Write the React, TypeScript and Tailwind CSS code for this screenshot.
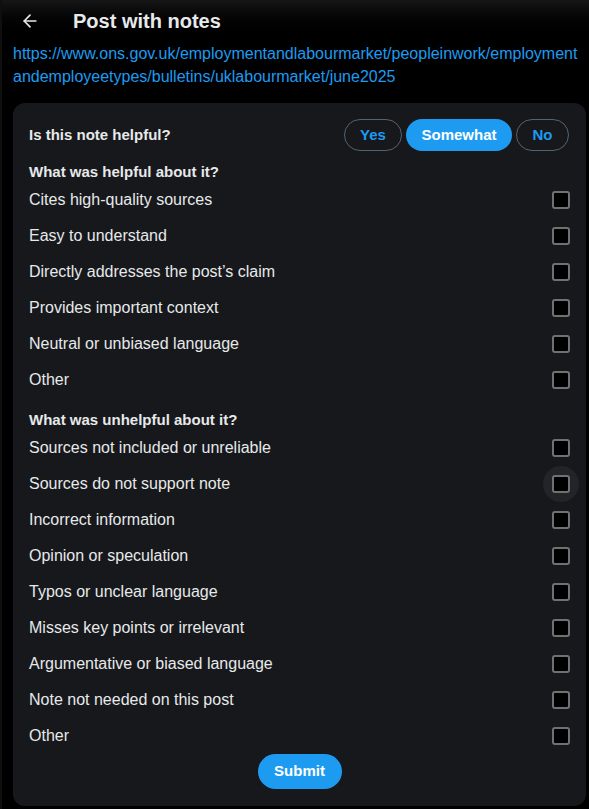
import { ArrowLeft } from "lucide-react";

const helpful = [
  "Cites high-quality sources",
  "Easy to understand",
  "Directly addresses the post’s claim",
  "Provides important context",
  "Neutral or unbiased language",
  "Other",
];

const unhelpful = [
  "Sources not included or unreliable",
  "Sources do not support note",
  "Incorrect information",
  "Opinion or speculation",
  "Typos or unclear language",
  "Misses key points or irrelevant",
  "Argumentative or biased language",
  "Note not needed on this post",
  "Other",
];

function Row({ label, hover }: { label: string; hover?: boolean }) {
  return (
    <div className="flex h-[36px] items-center justify-between">
      <span className="text-[16px] leading-[20px] text-[#e7e9ea]">{label}</span>
      <span className="relative flex h-[36px] w-[36px] items-center justify-center mr-[-9px]">
        {hover && <span className="absolute inset-0 rounded-full bg-[#222428]" />}
        <span className="relative h-[18px] w-[18px] rounded-[3px] border-2 border-[#6e7276] bg-black" />
      </span>
    </div>
  );
}

export default function App() {
  return (
    <div
      className="min-h-[809px] w-[589px] bg-black border-l-2 border-[#0f0f0f]"
      style={{ fontFamily: '"Liberation Sans", Arial, sans-serif' }}
    >
      <header className="flex h-[42px] items-center bg-gradient-to-b from-[#161616] to-black">
        <div className="flex w-[71px] items-center pl-[18px]">
          <ArrowLeft className="h-[20px] w-[20px] text-[#e7e9ea]" strokeWidth={2} />
        </div>
        <h1 className="text-[20px] font-bold leading-[24px] text-[#e7e9ea]">Post with notes</h1>
      </header>

      <div className="px-[11px] text-[16px] leading-[23px] text-[#1d9bf0]">
        <div>https://www.ons.gov.uk/employmentandlabourmarket/peopleinwork/employment</div>
        <div>andemployeetypes/bulletins/uklabourmarket/june2025</div>
      </div>

      <div className="ml-[11px] mr-[3px] mt-[15px] rounded-[12px] bg-[#16181c] px-[16px] pt-[16px] pb-[17px]">
        <div className="flex h-[32px] items-center justify-between">
          <span className="text-[15px] font-bold text-[#e7e9ea]">Is this note helpful?</span>
          <div className="mr-[1px] flex gap-[4px]">
            <button className="h-[32px] w-[58px] rounded-full border border-[#536471] text-[15px] font-bold text-[#1d9bf0]">
              Yes
            </button>
            <button className="h-[32px] w-[106px] rounded-full bg-[#1d9bf0] text-[15px] font-bold text-white">
              Somewhat
            </button>
            <button className="h-[32px] w-[53px] rounded-full border border-[#536471] text-[15px] font-bold text-[#1d9bf0]">
              No
            </button>
          </div>
        </div>

        <div className="mt-[11px] text-[15px] font-bold leading-[20px] text-[#e7e9ea]">
          What was helpful about it?
        </div>
        <div className="flex flex-col">
          {helpful.map((h) => (
            <Row key={h} label={h} />
          ))}
        </div>

        <div className="mt-[12px] text-[15px] font-bold leading-[20px] text-[#e7e9ea]">
          What was unhelpful about it?
        </div>
        <div className="flex flex-col">
          {unhelpful.map((h, i) => (
            <Row key={h + i} label={h} hover={i === 1} />
          ))}
        </div>

        <div className="flex justify-center">
          <button className="h-[35px] w-[84px] rounded-full bg-[#1d9bf0] text-[15px] font-bold text-white">
            Submit
          </button>
        </div>
      </div>
    </div>
  );
}
